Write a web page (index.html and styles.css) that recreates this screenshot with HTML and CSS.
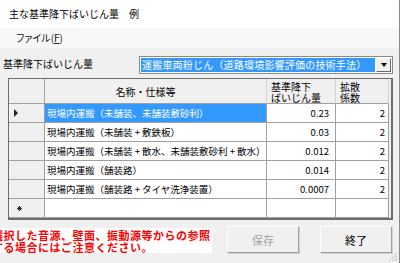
FILE: index.html
```html
<!DOCTYPE html>
<html lang="ja">
<head>
<meta charset="utf-8">
<title>主な基準降下ばいじん量 例</title>
<link rel="stylesheet" href="styles.css">
</head>
<body>
<div class="window">
  <div class="titlebar">主な基準降下ばいじん量　例</div>
  <div class="menubar"><span class="menu-item">ファイル(<u>F</u>)</span></div>
  <div class="content">
    <div class="selrow">
      <span class="sel-label">基準降下ばいじん量</span>
      <div class="combo">
        <span class="combo-text">運搬車両粉じん（道路環境影響評価の技術手法）</span>
        <span class="combo-btn"><span class="arrow"></span></span>
      </div>
    </div>
    <div class="grid">
      <div class="cell hdr corner"></div>
      <div class="cell hdr h-name">名称・仕様等</div>
      <div class="cell hdr h-left">基準降下<br>ばいじん量</div>
      <div class="cell hdr h-left h-last">拡散<br>係数</div>

      <div class="cell rh"><span class="tri"></span></div>
      <div class="cell name selected">現場内運搬（未舗装、未舗装敷砂利）</div>
      <div class="cell num">0.23</div>
      <div class="cell num last">2</div>

      <div class="cell rh"></div>
      <div class="cell name">現場内運搬（未舗装 + 敷鉄板）</div>
      <div class="cell num">0.03</div>
      <div class="cell num last">2</div>

      <div class="cell rh"></div>
      <div class="cell name">現場内運搬（未舗装 + 散水、未舗装敷砂利 + 散水）</div>
      <div class="cell num">0.012</div>
      <div class="cell num last">2</div>

      <div class="cell rh"></div>
      <div class="cell name">現場内運搬（舗装路）</div>
      <div class="cell num">0.014</div>
      <div class="cell num last">2</div>

      <div class="cell rh"></div>
      <div class="cell name">現場内運搬（舗装路 + タイヤ洗浄装置）</div>
      <div class="cell num">0.0007</div>
      <div class="cell num last">2</div>

      <div class="cell rh"><svg class="star" width="5" height="5" viewBox="0 0 5 5"><path d="M2.5 0V5M0 2.5H5M0.7 0.7L4.3 4.3M4.3 0.7L0.7 4.3" stroke="#333" stroke-width="1"/></svg></div>
      <div class="cell name"></div>
      <div class="cell num"></div>
      <div class="cell num last"></div>
    </div>
    <div class="bottom">
      <div class="note"><div class="note-text">選択した音源、壁面、振動源等からの参照<br>する場合にはご注意ください。</div></div>
      <button class="btn save" disabled>保存</button>
      <button class="btn close">終了</button>
    </div>
  </div>
  <svg class="grip" width="11" height="11" viewBox="0 0 11 11">
    <path d="M10 2L2 10M10 5L5 10M10 8L8 10" stroke="#a8a8a8" stroke-width="1" stroke-dasharray="1 1"/>
  </svg>
</div>
</body>
</html>
```
FILE: styles.css
```css
html, body {
  margin: 0;
  padding: 0;
}
body {
  width: 400px;
  height: 263px;
  overflow: hidden;
  background: #f0f0f0;
  font-family: "Noto Sans CJK JP", "Noto Sans", sans-serif;
  color: #000;
}
.window {
  position: relative;
  width: 400px;
  height: 263px;
  box-sizing: border-box;
  border-right: 1px solid #8a8a8a;
  background: #f0f0f0;
  display: flex;
  flex-direction: column;
}
.titlebar {
  height: 28px;
  line-height: 28px;
  background: #fff;
  padding-left: 9px;
  font-size: 10px;
  white-space: nowrap;
}
.menubar {
  height: 20px;
  line-height: 20px;
  background: #f7f7f7;
  padding-left: 16px;
  font-size: 10px;
  font-feature-settings: "palt";
  color: #222;
}
.menu-item u {
  text-decoration: underline;
}
.content {
  flex: 1;
  padding-right: 6px;
  display: flex;
  flex-direction: column;
}
.selrow {
  display: flex;
  align-items: center;
  margin-top: 8px;
  height: 18px;
}
.sel-label {
  margin-left: 3px;
  font-size: 10px;
  line-height: 12px;
  margin-top: -3px;
  white-space: nowrap;
}
.combo {
  margin-left: auto;
  width: 254px;
  height: 18px;
  box-sizing: border-box;
  border: 1px solid #8a8a8a;
  background: #fff;
  padding: 1px;
  display: flex;
}
.combo-text {
  flex: 1;
  background: #3399ff;
  color: #fff;
  font-size: 10px;
  line-height: 14px;
  padding-left: 1px;
  letter-spacing: 0.2px;
  white-space: nowrap;
  overflow: hidden;
}
.combo-btn {
  width: 15px;
  margin-left: 1px;
  box-sizing: border-box;
  background: #f0f0f0;
  border: 1px solid;
  border-color: #fff #696969 #696969 #fff;
  display: flex;
  align-items: center;
  justify-content: center;
}
.arrow {
  width: 0;
  height: 0;
  border-left: 3.5px solid transparent;
  border-right: 3.5px solid transparent;
  border-top: 4px solid #000;
}
.grid {
  margin-top: 4px;
  margin-left: 8px;
  width: 385px;
  height: 142px;
  box-sizing: border-box;
  border: 1px solid #6d6d6d;
  border-right-width: 2px;
  border-bottom-width: 2px;
  background: #f0f0f0;
  display: grid;
  grid-template-columns: 36px 222px 69px 53px;
  grid-template-rows: 25px repeat(6, 19px);
  overflow: hidden;
}
.cell {
  box-sizing: border-box;
  border-right: 1px solid #a0a0a0;
  border-bottom: 1px solid #a0a0a0;
  background: #fff;
  font-size: 9.5px;
  white-space: nowrap;
  overflow: hidden;
  display: flex;
  align-items: center;
}
.hdr {
  background: #f0f0f0;
  font-size: 10px;
  line-height: 11px;
  border-right-color: #d4d4d4;
}
.corner {
  border-right-color: #a0a0a0;
}
.h-name {
  justify-content: center;
  padding-right: 20px;
}
.h-left {
  padding-left: 4px;
  padding-top: 1px;
}
.rh {
  background: #f0f0f0;
}
.tri {
  display: block;
  margin-left: 5px;
  width: 0;
  height: 0;
  border-left: 4px solid #222;
  border-top: 4px solid transparent;
  border-bottom: 4px solid transparent;
}
.star {
  display: block;
  margin-left: 8px;
}
.name {
  padding-left: 2px;
}
.selected {
  background: #3399ff;
  color: #fff;
}
.num {
  justify-content: flex-end;
  padding-right: 6px;
}
.num.last {
  padding-right: 3px;
}
.bottom {
  display: flex;
  align-items: flex-start;
  margin-top: 6px;
}
.note {
  margin-top: 2px;
  width: 212px;
  height: 25px;
  background: #fff;
  overflow: hidden;
  box-sizing: border-box;
  padding-top: 1px;
}
.note-text {
  margin-left: -8px;
  color: #ff0000;
  font-weight: bold;
  font-size: 11px;
  letter-spacing: 0.5px;
  line-height: 12px;
  white-space: nowrap;
}
.btn {
  width: 72px;
  height: 27px;
  box-sizing: border-box;
  background: #f0f0f0;
  border: 1px solid;
  border-color: #fff #a0a0a0 #a0a0a0 #fff;
  box-shadow: 1px 1px 0 #d0d0d0;
  font-family: "Noto Sans CJK JP", sans-serif;
  font-size: 11px;
  padding: 0;
  color: #000;
}
.save {
  margin-left: 15px;
  color: #a0a0a0;
}
.close {
  margin-left: 21px;
}
.grip {
  position: absolute;
  right: 1px;
  bottom: 1px;
}
```
